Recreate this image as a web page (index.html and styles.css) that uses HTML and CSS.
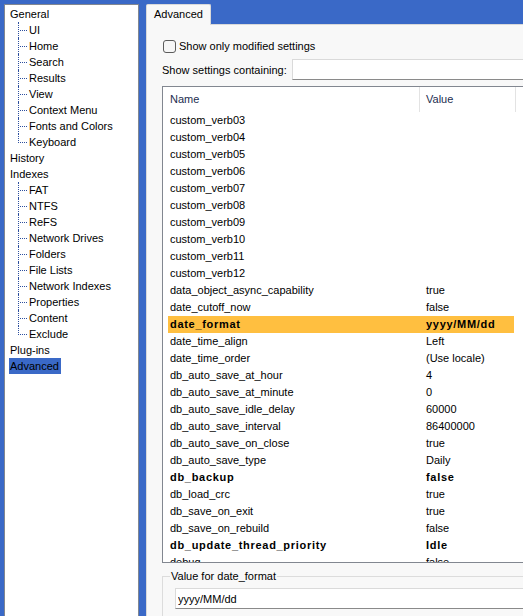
FILE: index.html
```html
<!DOCTYPE html>
<html lang="en">
<head>
    <meta charset="UTF-8">
    <meta name="viewport" content="width=device-width, initial-scale=1.0">
    <title>Options</title>
    <link rel="stylesheet" href="styles.css">
</head>
<body>

    <div class="window">
        <ul class="tree">
            <li class="node">General</li>
            <li>
                <ul class="sub">
                    <li>UI</li>
                    <li>Home</li>
                    <li>Search</li>
                    <li>Results</li>
                    <li>View</li>
                    <li>Context Menu</li>
                    <li>Fonts and Colors</li>
                    <li>Keyboard</li>
                </ul>
            </li>
            <li class="node">History</li>
            <li class="node">Indexes</li>
            <li>
                <ul class="sub">
                    <li>FAT</li>
                    <li>NTFS</li>
                    <li>ReFS</li>
                    <li>Network Drives</li>
                    <li>Folders</li>
                    <li>File Lists</li>
                    <li>Network Indexes</li>
                    <li>Properties</li>
                    <li>Content</li>
                    <li>Exclude</li>
                </ul>
            </li>
            <li class="node">Plug-ins</li>
            <li class="node"><span class="selected">Advanced</span></li>
        </ul>

        <div class="options">
            <div class="tabs">
                <div class="tab">Advanced</div>
            </div>
            <div class="page">
                <label class="check-row">
                    <span class="check"></span>
                    Show only modified settings
                </label>

                <div class="filter-row">
                    <span class="filter-label">Show settings containing:</span>
                    <input type="text" class="filter" id="filter">
                </div>

                <div class="list">
                    <div class="list-head">
                        <div class="col-name">Name</div>
                        <div class="col-value">Value</div>
                        <div class="col-rest"></div>
                    </div>
                    <div class="rows" id="rows"></div>
                </div>

                <fieldset class="value-box">
                    <legend>Value for date_format</legend>
                    <input type="text" class="value-input" value="yyyy/MM/dd">
                </fieldset>
            </div>
        </div>
    </div>

    <script>
        // name, value, modified
        var settings = [
            ["custom_verb03", ""],
            ["custom_verb04", ""],
            ["custom_verb05", ""],
            ["custom_verb06", ""],
            ["custom_verb07", ""],
            ["custom_verb08", ""],
            ["custom_verb09", ""],
            ["custom_verb10", ""],
            ["custom_verb11", ""],
            ["custom_verb12", ""],
            ["data_object_async_capability", "true"],
            ["date_cutoff_now", "false"],
            ["date_format", "yyyy/MM/dd", true],
            ["date_time_align", "Left"],
            ["date_time_order", "(Use locale)"],
            ["db_auto_save_at_hour", "4"],
            ["db_auto_save_at_minute", "0"],
            ["db_auto_save_idle_delay", "60000"],
            ["db_auto_save_interval", "86400000"],
            ["db_auto_save_on_close", "true"],
            ["db_auto_save_type", "Daily"],
            ["db_backup", "false", true],
            ["db_load_crc", "true"],
            ["db_save_on_exit", "true"],
            ["db_save_on_rebuild", "false"],
            ["db_update_thread_priority", "Idle", true],
            ["debug", "false"]
        ];

        var rows = document.getElementById("rows");

        settings.forEach(function(s) {
            var row = document.createElement("div");
            row.className = "row";
            if (s[2]) row.className += " modified";
            if (s[0] === "date_format") row.className += " current";

            var name = document.createElement("div");
            name.className = "name";
            name.textContent = s[0];

            var value = document.createElement("div");
            value.className = "value";
            value.textContent = s[1];

            row.appendChild(name);
            row.appendChild(value);
            rows.appendChild(row);
        });
    </script>

</body>
</html>
```

FILE: styles.css
```css
* {
    box-sizing: border-box;
}

html, body {
    margin: 0;
    height: 100%;
    overflow: hidden;
}

body {
    font-family: "Liberation Sans", Arial, sans-serif;
    font-size: 11px;
    color: #000;
    background-color: #3a69c7;
    padding: 4px 0 0 4px;
}

ul {
    list-style: none;
    margin: 0;
    padding: 0;
}

.window {
    display: flex;
    gap: 7px;
    height: 640px;
}

/* left tree */

.tree {
    flex: 0 0 135px;
    background-color: #fff;
    border: 1px solid #828790;
    padding: 1px 0 0 4px;
}

.tree li {
    line-height: 16px;
    white-space: nowrap;
}

.tree .node {
    height: 16px;
    padding-left: 1px;
}

.tree .selected {
    display: inline-block;
    background-color: #3a69c7;
    margin-left: -1px;
    padding: 0 2px 0 1px;
}

.sub li {
    position: relative;
    height: 16px;
    padding-left: 20px;
}

.sub li::before {
    content: "";
    position: absolute;
    left: 9px;
    top: 0;
    height: 16px;
    border-left: 1px dotted #2d4f9e;
}

.sub li:last-child::before {
    height: 9px;
}

.sub li::after {
    content: "";
    position: absolute;
    left: 11px;
    top: 8px;
    width: 7px;
    border-top: 1px dotted #2d4f9e;
}

/* right side */

.options {
    flex: 0 0 430px;
    display: flex;
    flex-direction: column;
}

.tabs {
    display: flex;
    height: 20px;
}

.tab {
    position: relative;
    z-index: 1;
    height: 21px;
    padding: 0 7px;
    line-height: 19px;
    background-color: #f8f8f8;
    border: 1px solid #d9d9d9;
    border-bottom: none;
    border-radius: 2px 2px 0 0;
}

.page {
    flex: 1;
    background-color: #f8f8f8;
    border: 1px solid #d9d9d9;
    padding: 11px 0 0 15px;
}

.check-row {
    display: flex;
    align-items: center;
    height: 20px;
}

.check {
    width: 13px;
    height: 13px;
    margin: 0 3px 0 1px;
    border: 1px solid #5c5c5c;
    border-radius: 3px;
    background-color: #f6f6f6;
}

.filter-row {
    display: flex;
    align-items: center;
    height: 21px;
    margin-top: 3px;
}

.filter-label {
    width: 130px;
}

.filter {
    width: 260px;
    height: 21px;
    margin: 0;
    padding: 0 3px;
    border: 1px solid #dadada;
    border-bottom-color: #8a8a8a;
    background-color: #fff;
    font: inherit;
}

/* settings list */

.list {
    width: 400px;
    height: 477px;
    margin-top: 6px;
    background-color: #fff;
    border: 1px solid #828790;
    overflow: hidden;
}

.list-head {
    display: flex;
    height: 25px;
    line-height: 25px;
    color: #1c2d4f;
}

.col-name {
    width: 257px;
    padding-left: 7px;
    border-right: 1px solid #e3e3e3;
}

.col-value {
    width: 96px;
    padding-left: 6px;
    border-right: 1px solid #e3e3e3;
}

.row {
    display: flex;
    width: 346px;
    height: 17px;
    line-height: 17px;
    margin-left: 5px;
    white-space: nowrap;
}

.row .name {
    width: 256px;
    padding-left: 2px;
}

.row .value {
    padding-left: 2px;
}

.row.modified {
    font-weight: bold;
    letter-spacing: 0.7px;
}

.row.current {
    background-color: #ffbf40;
}

/* value editor */

.value-box {
    width: 400px;
    margin: 7px 0 0 0;
    padding: 0 0 10px 7px;
    border: 1px solid #dcdcdc;
}

.value-box legend {
    padding: 0 1px;
    line-height: 13px;
}

.value-input {
    display: block;
    width: 380px;
    height: 21px;
    margin: 5px 0 0 5px;
    padding: 0 2px;
    border: 1px solid #dadada;
    border-bottom-color: #8a8a8a;
    background-color: #fff;
    font: inherit;
}
```
